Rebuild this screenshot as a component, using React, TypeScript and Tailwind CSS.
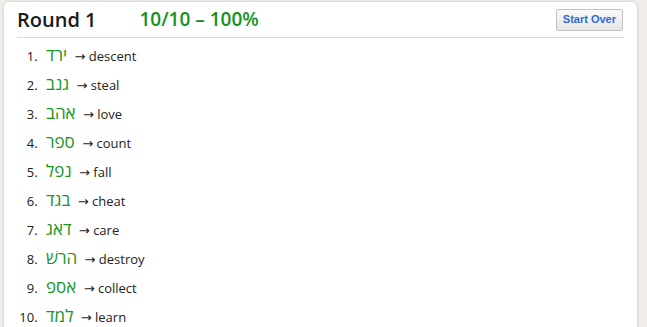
import React from "react";

const items: [string, string][] = [
  ["ירד", "descent"],
  ["גנב", "steal"],
  ["אהב", "love"],
  ["ספר", "count"],
  ["נפל", "fall"],
  ["בגד", "cheat"],
  ["דאג", "care"],
  ["הרשׁ", "destroy"],
  ["אספ", "collect"],
  ["למד", "learn"],
];

export default function App() {
  return (
    <div className="w-[647px] h-[327px] overflow-hidden bg-[#f1eee9] pl-[4px] pt-[2px]" style={{ fontFamily: '"Open Sans", "DejaVu Sans", sans-serif' }}>
      <div className="w-[633px] h-[340px] bg-white rounded-[5px] shadow-[0_0_3px_rgba(0,0,0,0.2)] px-[13px]">
        <div className="flex items-center h-[36px] border-b border-[#dcdad6]">
          <div className="text-[20px] font-semibold text-[#1a1a1a] leading-none">Round 1</div>
          <div className="ml-[43px] text-[19px] font-semibold text-[#13921e] leading-none">10/10 – 100%</div>
          <button className="ml-auto mr-[1px] h-[22px] px-[6px] rounded-[2px] border border-[#c2c2c2] bg-gradient-to-b from-[#fafafa] to-[#e6e6e6] text-[11px] font-bold text-[#2f6ad9] leading-none" style={{ fontFamily: '"Liberation Sans", Arial, sans-serif' }}>
            Start Over
          </button>
        </div>
        <ol className="list-decimal pl-[24px] pt-[8px] text-[13px] text-[#222]">
          {items.map(([he, en], i) => (
            <li key={i} className="h-[29px] leading-[18px] pl-[5px]">
              <span className="text-[17px] leading-[18px] text-[#17951f] mr-[4px]" dir="rtl">{he}</span>
              <span> → {en}</span>
            </li>
          ))}
        </ol>
      </div>
    </div>
  );
}
